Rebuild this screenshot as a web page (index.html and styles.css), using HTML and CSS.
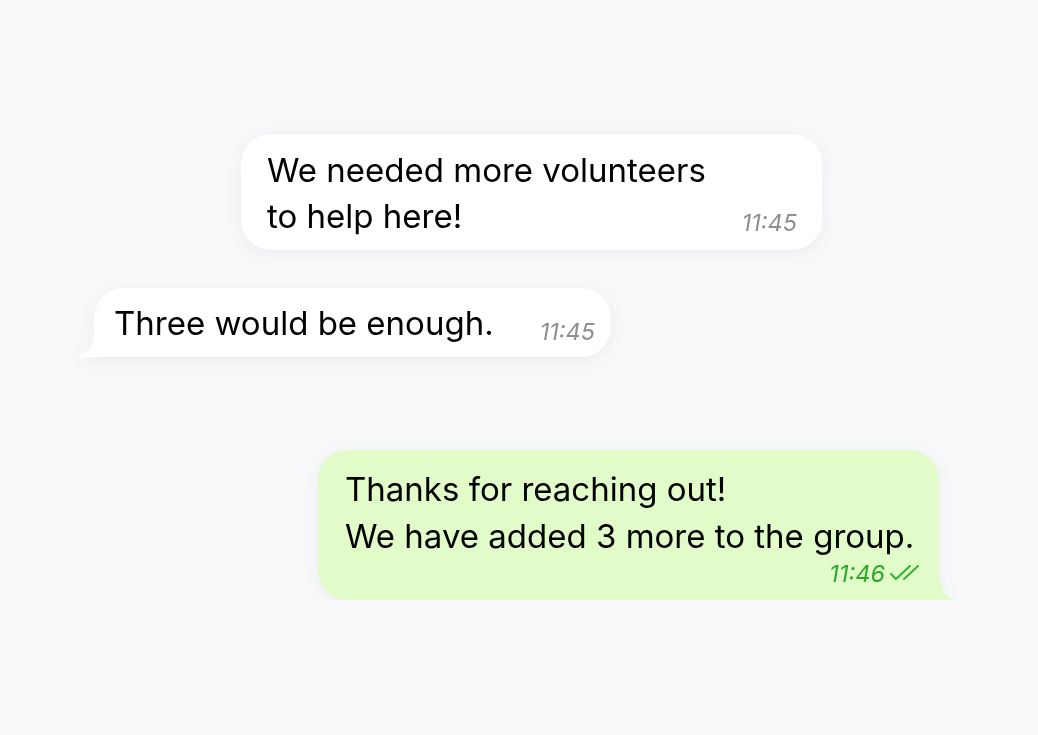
FILE: index.html
```html
<!DOCTYPE html>
<html>
<head>
<meta charset="utf-8">
<link rel="stylesheet" href="styles.css">
</head>
<body>
<main class="chat">
  <div class="bubble in first">
    <p class="text">We needed more volunteers<br>to help here!</p>
    <span class="time">11:45</span>
  </div>
  <div class="bubble in second">
    <p class="text">Three would be enough.</p>
    <span class="time">11:45</span>
    <svg class="tail tail-left" width="20" height="24" viewBox="0 0 20 24"><path d="M20 0 L19 0 C19 13 13 21 0 24 L20 24 Z" fill="#fff"/></svg>
  </div>
  <div class="bubble out third">
    <p class="text">Thanks for reaching out!<br>We have added 3 more to the group.</p>
    <div class="meta">
      <span class="time">11:46</span>
      <svg class="ticks" width="32" height="16" viewBox="0 0 32 16"><path d="M2 9 L7 14 L21 1 M15 14 L29 1" fill="none" stroke="#2fb52f" stroke-width="2" stroke-linecap="round" stroke-linejoin="round"/></svg>
    </div>
    <svg class="tail tail-right" width="15" height="30" viewBox="0 0 15 30"><path d="M0 0 L1 0 C1 14 5 25 15 30 L0 30 Z" fill="#e1fcc8"/></svg>
  </div>
</main>
</body>
</html>
```
FILE: styles.css
```css
html, body {
  margin: 0;
  padding: 0;
  background: #f8f9fb;
}
body {
  font-family: "Inter", "Noto Sans", sans-serif;
  color: #000;
}
.chat {
  display: flex;
  flex-direction: column;
  align-items: flex-start;
  padding-top: 134px;
}
.bubble {
  position: relative;
  background: #fff;
  border-radius: 30px;
  display: flex;
  align-items: flex-end;
  justify-content: space-between;
  box-sizing: border-box;
  filter: drop-shadow(0 3px 8px rgba(40, 50, 70, 0.07));
}
.text {
  margin: 0;
  font-size: 33px;
  line-height: 46px;
}
.time {
  font-size: 23.5px;
  font-style: italic;
  color: #8e8e93;
  line-height: 26px;
}
.first {
  margin-left: 241px;
  width: 581px;
  height: 116px;
  padding: 13px 25px 11px 26px;
}
.first .time {
  margin-bottom: 3px;
}
.second {
  margin-left: 94px;
  margin-top: 38px;
  width: 517px;
  height: 69px;
  padding: 0 16px 0 20px;
  align-items: center;
  border-bottom-left-radius: 0;
}
.second .time {
  margin-top: 18px;
}
.tail {
  position: absolute;
  bottom: 0;
}
.tail-left {
  left: -19px;
}
.tail-right {
  right: -14px;
}
.out {
  background: #e1fcc8;
}
.third {
  margin-left: 318px;
  margin-top: 93px;
  width: 621px;
  height: 150px;
  padding: 16px 18px 0 27px;
  flex-direction: column;
  align-items: stretch;
  justify-content: flex-start;
  border-bottom-right-radius: 0;
}
.third .text {
  line-height: 47px;
}
.meta {
  display: flex;
  justify-content: flex-end;
  align-items: center;
  gap: 4px;
  margin-top: 1px;
}
.ticks {
  margin-top: -3px;
}
.out .time {
  color: #2aa82a;
}
```
